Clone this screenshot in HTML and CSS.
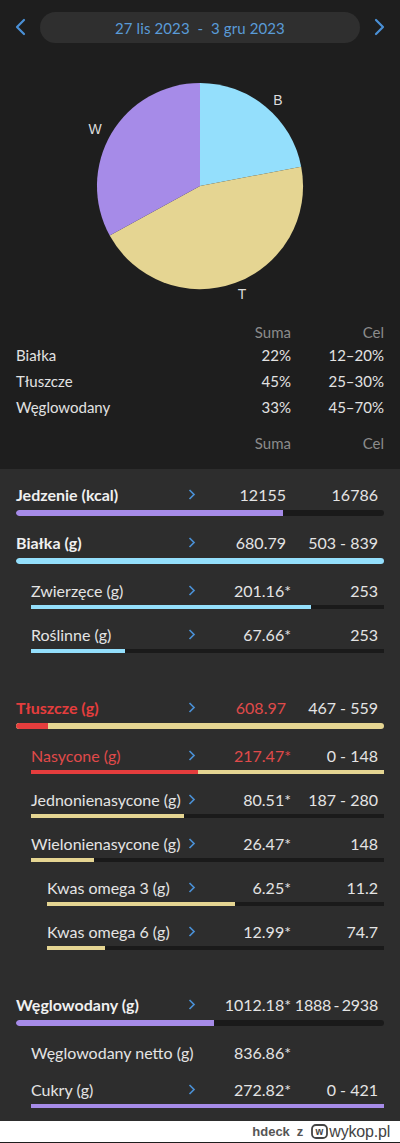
FILE: index.html
```html
<!DOCTYPE html>
<html lang="pl">
<head>
<meta charset="utf-8">
<link rel="stylesheet" href="styles.css">
</head>
<body>
<div class="top">
  <div class="header">
    <svg class="nav" width="14" height="18" viewBox="0 0 14 18"><path d="M11 2 L4 9 L11 16" fill="none" stroke="#4a90d6" stroke-width="2.2" stroke-linecap="round" stroke-linejoin="round"/></svg>
    <div class="pill">27 lis 2023&nbsp; - &nbsp;3 gru 2023</div>
    <svg class="nav" width="14" height="18" viewBox="0 0 14 18"><path d="M3 2 L10 9 L3 16" fill="none" stroke="#4a90d6" stroke-width="2.2" stroke-linecap="round" stroke-linejoin="round"/></svg>
  </div>
  <svg class="pie" width="400" height="265" viewBox="0 0 400 265">
    <path d="M200,130 L200,27 A103,103 0 0 1 301.2,110.7 Z" fill="#94dffc"/>
    <path d="M200,130 L301.2,110.7 A103,103 0 0 1 109.7,179.6 Z" fill="#e5d592"/>
    <path d="M200,130 L109.7,179.6 A103,103 0 0 1 200,27 Z" fill="#a68be8"/>
    <text x="278" y="44" class="plabel">B</text>
    <text x="95" y="73" class="plabel">W</text>
    <text x="242" y="238" class="plabel">T</text>
  </svg>
  <div class="summary">
    <div class="srow shead"><span></span><span>Suma</span><span>Cel</span></div>
    <div class="srow"><span>Białka</span><span>22%</span><span>12–20%</span></div>
    <div class="srow"><span>Tłuszcze</span><span>45%</span><span>25–30%</span></div>
    <div class="srow"><span>Węglowodany</span><span>33%</span><span>45–70%</span></div>
    <div class="srow shead second"><span></span><span>Suma</span><span>Cel</span></div>
  </div>
</div>

<div class="details">
  <div class="item main">
    <div class="line bold"><span class="lbl">Jedzenie (kcal)</span><span class="chev"><svg width="8" height="11" viewBox="0 0 8 11"><path d="M1.5 1 L6 5.5 L1.5 10" fill="none" stroke="#4a8fd4" stroke-width="1.7"/></svg></span><span class="val">12155</span><span class="cel">16786</span></div>
    <div class="bar"><div class="fill c-purple" style="width:72.5%"></div></div>
  </div>
  <div class="item main">
    <div class="line bold"><span class="lbl">Białka (g)</span><span class="chev"><svg width="8" height="11" viewBox="0 0 8 11"><path d="M1.5 1 L6 5.5 L1.5 10" fill="none" stroke="#4a8fd4" stroke-width="1.7"/></svg></span><span class="val">680.79</span><span class="cel">503 - 839</span></div>
    <div class="bar"><div class="fill c-blue" style="width:100%"></div></div>
  </div>
  <div class="item sub l1">
    <div class="line"><span class="lbl">Zwierzęce (g)</span><span class="chev"><svg width="8" height="11" viewBox="0 0 8 11"><path d="M1.5 1 L6 5.5 L1.5 10" fill="none" stroke="#4a8fd4" stroke-width="1.7"/></svg></span><span class="val">201.16<span class="star">*</span></span><span class="cel">253</span></div>
    <div class="bar"><div class="fill c-blue" style="width:79.3%"></div></div>
  </div>
  <div class="item sub l1">
    <div class="line"><span class="lbl">Roślinne (g)</span><span class="chev"><svg width="8" height="11" viewBox="0 0 8 11"><path d="M1.5 1 L6 5.5 L1.5 10" fill="none" stroke="#4a8fd4" stroke-width="1.7"/></svg></span><span class="val">67.66<span class="star">*</span></span><span class="cel">253</span></div>
    <div class="bar"><div class="fill c-blue" style="width:26.6%"></div></div>
  </div>

  <div class="item main group">
    <div class="line bold over"><span class="lbl">Tłuszcze (g)</span><span class="chev"><svg width="8" height="11" viewBox="0 0 8 11"><path d="M1.5 1 L6 5.5 L1.5 10" fill="none" stroke="#4a8fd4" stroke-width="1.7"/></svg></span><span class="val">608.97</span><span class="cel">467 - 559</span></div>
    <div class="bar ybg"><div class="fill c-red" style="width:8.7%"></div></div>
  </div>
  <div class="item sub l1">
    <div class="line over"><span class="lbl">Nasycone (g)</span><span class="chev"><svg width="8" height="11" viewBox="0 0 8 11"><path d="M1.5 1 L6 5.5 L1.5 10" fill="none" stroke="#4a8fd4" stroke-width="1.7"/></svg></span><span class="val">217.47<span class="star">*</span></span><span class="cel">0 - 148</span></div>
    <div class="bar ybg"><div class="fill c-red" style="width:47.3%"></div></div>
  </div>
  <div class="item sub l1">
    <div class="line"><span class="lbl">Jednonienasycone (g)</span><span class="chev"><svg width="8" height="11" viewBox="0 0 8 11"><path d="M1.5 1 L6 5.5 L1.5 10" fill="none" stroke="#4a8fd4" stroke-width="1.7"/></svg></span><span class="val">80.51<span class="star">*</span></span><span class="cel">187 - 280</span></div>
    <div class="bar"><div class="fill c-yellow" style="width:43.3%"></div></div>
  </div>
  <div class="item sub l1">
    <div class="line"><span class="lbl">Wielonienasycone (g)</span><span class="chev"><svg width="8" height="11" viewBox="0 0 8 11"><path d="M1.5 1 L6 5.5 L1.5 10" fill="none" stroke="#4a8fd4" stroke-width="1.7"/></svg></span><span class="val">26.47<span class="star">*</span></span><span class="cel">148</span></div>
    <div class="bar"><div class="fill c-yellow" style="width:17.8%"></div></div>
  </div>
  <div class="item sub l2">
    <div class="line"><span class="lbl">Kwas omega 3 (g)</span><span class="chev"><svg width="8" height="11" viewBox="0 0 8 11"><path d="M1.5 1 L6 5.5 L1.5 10" fill="none" stroke="#4a8fd4" stroke-width="1.7"/></svg></span><span class="val">6.25<span class="star">*</span></span><span class="cel">11.2</span></div>
    <div class="bar"><div class="fill c-yellow" style="width:55.8%"></div></div>
  </div>
  <div class="item sub l2">
    <div class="line"><span class="lbl">Kwas omega 6 (g)</span><span class="chev"><svg width="8" height="11" viewBox="0 0 8 11"><path d="M1.5 1 L6 5.5 L1.5 10" fill="none" stroke="#4a8fd4" stroke-width="1.7"/></svg></span><span class="val">12.99<span class="star">*</span></span><span class="cel">74.7</span></div>
    <div class="bar"><div class="fill c-yellow" style="width:17.3%"></div></div>
  </div>

  <div class="item main group">
    <div class="line bold"><span class="lbl">Węglowodany (g)</span><span class="chev"><svg width="8" height="11" viewBox="0 0 8 11"><path d="M1.5 1 L6 5.5 L1.5 10" fill="none" stroke="#4a8fd4" stroke-width="1.7"/></svg></span><span class="val">1012.18<span class="star">*</span></span><span class="cel tight">1888 - 2938</span></div>
    <div class="bar"><div class="fill c-purple" style="width:53.8%"></div></div>
  </div>
  <div class="item sub l1 nobar">
    <div class="line"><span class="lbl">Węglowodany netto (g)</span><span class="chev"></span><span class="val">836.86<span class="star">*</span></span><span class="cel"></span></div>
  </div>
  <div class="item sub l1 after-nobar">
    <div class="line"><span class="lbl">Cukry (g)</span><span class="chev"><svg width="8" height="11" viewBox="0 0 8 11"><path d="M1.5 1 L6 5.5 L1.5 10" fill="none" stroke="#4a8fd4" stroke-width="1.7"/></svg></span><span class="val">272.82<span class="star">*</span></span><span class="cel">0 - 421</span></div>
    <div class="bar"><div class="fill c-purple" style="width:100%"></div></div>
  </div>
</div>

<div class="footer">
  <span class="who">hdeck</span><span class="z">z</span>
  <span class="logo"><svg width="17" height="15" viewBox="0 0 17 15"><rect x="1" y="1" width="15" height="13" rx="4" fill="none" stroke="#444" stroke-width="1.8"/><text x="8.5" y="11" class="logow">w</text></svg></span><span class="wykop">wykop.pl</span>
</div>
</body>
</html>
```

FILE: styles.css
```css
* { box-sizing: border-box; }
html, body { margin: 0; padding: 0; }
body {
  width: 400px;
  background: #1e1e1e;
  font-family: Lato, "Open Sans", "Liberation Sans", sans-serif;
  color: #e6e6e6;
}
.top { background: #1e1e1e; }
.header {
  height: 56px;
  display: flex;
  align-items: center;
  justify-content: space-between;
  padding: 0 13px 0 13px;
}
.nav { display: block; margin-top: -2px; }
.pill {
  width: 320px;
  height: 31px;
  margin-top: -1px;
  border-radius: 16px;
  background: #2f2f2f;
  color: #5a9bd8;
  font-size: 15px;
  display: flex;
  align-items: center;
  justify-content: center;
  letter-spacing: 0.1px;
}
.pie { display: block; }
.plabel {
  fill: #dcdcdc;
  font-size: 14px;
  font-family: "Liberation Sans", Arial, sans-serif;
  text-anchor: middle;
  dominant-baseline: central;
}
.summary { padding: 0 16px 16px 16px; }
.srow {
  display: grid;
  grid-template-columns: 1fr 80px 93px;
  height: 26px;
  align-items: center;
  font-size: 15px;
  color: #e2e2e2;
}
.srow span:nth-child(2), .srow span:nth-child(3) { text-align: right; }
.shead { color: #8b8b8b; height: 20px; margin-top: 1px; }
.shead.second { margin-top: 13px; }

.details {
  background: #2d2d2d;
  padding: 15px 16px 13px 16px;
  display: flex;
  flex-direction: column;
  gap: 15px;
}
.item { display: flex; flex-direction: column; }
.main { gap: 6px; }
.main + .main { margin-top: 1px; }
.sub { gap: 5px; }
.main + .sub { margin-top: 1px; }
.group { margin-top: 29px; }
.after-nobar { margin-top: 2px; }
.line {
  display: grid;
  grid-template-columns: 172px 10px 88px 92px 1fr;
  height: 20px;
  align-items: center;
  font-size: 16px;
  color: #e4e4e4;
  white-space: nowrap;
}
.line.bold .lbl { font-weight: 700; color: #f0f0f0; }
.l1 .lbl { padding-left: 15px; }
.l2 .lbl { padding-left: 31px; }
.chev { display: flex; align-items: center; height: 20px; }
.chev svg { display: block; }
.val, .cel { text-align: right; }
.cel.tight { word-spacing: -1.5px; letter-spacing: -0.2px; }
.star { margin-right: -5px; }
.line.over .lbl, .line.over .val { color: #e04a4a; }
.line.bold.over .lbl { color: #e53d3d; }

.bar {
  height: 4px;
  background: #1a1a1a;
  overflow: hidden;
  display: flex;
}
.main .bar { height: 6px; border-radius: 3px; }
.l1 .bar { margin-left: 15px; }
.l2 .bar { margin-left: 31px; }
.fill { height: 100%; }
.main .fill { border-radius: 3px 0 0 3px; }
.c-purple { background: #a68be8; }
.c-blue { background: #94dffc; }
.c-yellow { background: #e5d592; }
.c-red { background: #e53d3d; }
.bar.ybg { background: #e5d592; }

.footer {
  height: 21px;
  background: #ffffff;
  display: flex;
  align-items: center;
  justify-content: flex-end;
  padding-right: 10px;
  font-family: "Liberation Sans", Arial, sans-serif;
  color: #4a4a4a;
}
.who { font-size: 13px; font-weight: 700; color: #555; }
.z { font-size: 13px; font-weight: 700; color: #555; margin: 0 8px 0 7px; }
.logo { display: flex; align-items: center; margin-right: 1px; }
.logow { font-size: 10px; font-weight: 700; fill: #444; text-anchor: middle; font-family: "Liberation Sans", sans-serif; }
.wykop { font-size: 16px; color: #444; letter-spacing: -0.2px; }
```
